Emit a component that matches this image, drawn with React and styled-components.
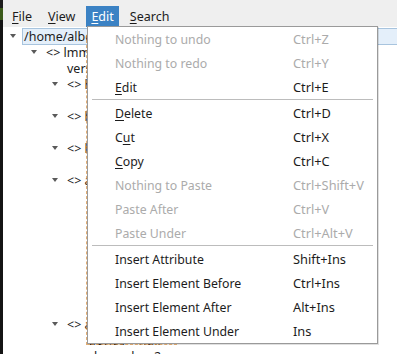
import React from "react"
import styled, { createGlobalStyle } from "styled-components"

const GlobalStyle = createGlobalStyle`
  html, body {
    margin: 0;
    padding: 0;
    background: #ffffff;
  }
  body {
    font-family: "Noto Sans", "Open Sans", sans-serif;
    font-size: 12px;
    color: #1c1c1c;
  }
`

const Screen = styled.div`
  width: 397px;
  height: 354px;
  display: flex;
  overflow: hidden;
  position: relative;
`

const Edge = styled.div`
  width: 3px;
  flex: none;
  background: linear-gradient(
    to bottom,
    #1d1d1d 0,
    #1d1d1d 8px,
    #3b5a1a 8px,
    #3b5a1a 20px,
    #141414 20px
  );
`

const Window = styled.div`
  flex: 1;
  display: flex;
  flex-direction: column;
  position: relative;
`

const MenuBar = styled.div`
  height: 27px;
  box-sizing: border-box;
  padding: 6px 0 0 4px;
  display: flex;
  gap: 6px;
  background: #efefef;
`

const BarItem = styled.div`
  height: 21px;
  padding: 0 5px;
  display: flex;
  align-items: center;
  font-size: 12.5px;
  color: ${p => (p.$active ? "#ffffff" : "#1c1c1c")};
  background: ${p => (p.$active ? "#3b82c4" : "transparent")};
`

const Mn = styled.span`
  text-decoration: underline;
  text-underline-offset: 2px;
`

const Tree = styled.div`
  flex: 1;
  padding-top: 1px;
  background: #ffffff;
`

const Row = styled.div`
  height: 16px;
  display: flex;
  align-items: center;
  padding-left: ${p => p.$level * 21 + 6}px;
  white-space: nowrap;
  font-size: 12.5px;
`

const Arrow = styled.span`
  flex: none;
  width: 0;
  height: 0;
  margin: 0 8px 0 1px;
  border-left: 3.5px solid transparent;
  border-right: 3.5px solid transparent;
  border-top: 4px solid ${p => (p.$leaf ? "transparent" : "#5a5a5a")};
`

const Label = styled.span`
  height: 15px;
  line-height: 15px;
  padding-left: ${p => (p.$selected ? "1px" : "0")};
  margin-left: ${p => (p.$selected ? "-2px" : "0")};
  flex: ${p => (p.$selected ? "1" : "none")};
  background: ${p => (p.$selected ? "#e4effa" : "transparent")};
  border: 1px solid ${p => (p.$selected ? "#a8c4de" : "transparent")};
  border-right: none;
`

const Popup = styled.div`
  position: absolute;
  left: 84px;
  top: 26px;
  width: 289px;
  background: #ffffff;
  border: 1px solid #9a9a9a;
  box-shadow: 1px 1px 0 rgba(0, 0, 0, 0.12);

  &::before {
    content: "";
    position: absolute;
    left: -2px;
    bottom: -2px;
    top: 8px;
    right: 200px;
    border-left: 1px dashed rgba(214, 140, 60, 0.7);
    border-bottom: 1px dashed rgba(214, 140, 60, 0.7);
  }
`

const Item = styled.div`
  height: 24px;
  display: grid;
  grid-template-columns: 178px 1fr;
  align-items: center;
  padding-left: 27px;
  font-size: 12.3px;
  color: ${p => (p.$disabled ? "#ababab" : "#1c1c1c")};
`

const Shortcut = styled.span`
  font-size: 12.8px;
`

const Separator = styled.div`
  height: 2px;
  margin: 0 4px;
  border-top: 1px solid #bcbcbc;
  box-sizing: border-box;
`

const tree = [
  { level: 0, text: "/home/alberto/projects/demo.mmp", arrow: true, selected: true },
  { level: 1, text: "<> lmms-project", arrow: true },
  { level: 2, text: "version = 1.0", arrow: false },
  { level: 2, text: "<> head", arrow: true },
  { level: 3, text: "bpm = 140", arrow: false },
  { level: 2, text: "<> head", arrow: true },
  { level: 3, text: "timesig = 4", arrow: false },
  { level: 2, text: "<> head", arrow: true },
  { level: 3, text: "mastervol = 100", arrow: false },
  { level: 2, text: "<> audio", arrow: true },
  { level: 3, text: "samplerate = 44100", arrow: false },
  { level: 3, text: "buffersize = 256", arrow: false },
  { level: 3, text: "latency = 10", arrow: false },
  { level: 3, text: "backend = jack", arrow: false },
  { level: 3, text: "input = system", arrow: false },
  { level: 3, text: "output = system", arrow: false },
  { level: 3, text: "format = float", arrow: false },
  { level: 3, text: "dither = none", arrow: false },
  { level: 2, text: "<> audio", arrow: true },
  { level: 3, text: "device = null", arrow: false },
  { level: 3, text: "channels = 2", arrow: false },
]

const menu = [
  { label: "Nothing to undo", key: "Ctrl+Z", disabled: true },
  { label: "Nothing to redo", key: "Ctrl+Y", disabled: true },
  { label: "Edit", mn: 0, key: "Ctrl+E" },
  { sep: true },
  { label: "Delete", mn: 0, key: "Ctrl+D" },
  { label: "Cut", mn: 1, key: "Ctrl+X" },
  { label: "Copy", mn: 0, key: "Ctrl+C" },
  { label: "Nothing to Paste", key: "Ctrl+Shift+V", disabled: true },
  { label: "Paste After", key: "Ctrl+V", disabled: true },
  { label: "Paste Under", key: "Ctrl+Alt+V", disabled: true },
  { sep: true },
  { label: "Insert Attribute", key: "Shift+Ins" },
  { label: "Insert Element Before", key: "Ctrl+Ins" },
  { label: "Insert Element After", key: "Alt+Ins" },
  { label: "Insert Element Under", key: "Ins" },
]

function Mnemonic({ text, at }) {
  if (at === undefined) return text
  return (
    <>
      {text.slice(0, at)}
      <Mn>{text[at]}</Mn>
      {text.slice(at + 1)}
    </>
  )
}

export default function App() {
  return (
    <>
      <GlobalStyle />
      <Screen>
        <Edge />
        <Window>
          <MenuBar>
            <BarItem><Mnemonic text="File" at={0} /></BarItem>
            <BarItem><Mnemonic text="View" at={0} /></BarItem>
            <BarItem $active><Mnemonic text="Edit" at={0} /></BarItem>
            <BarItem><Mnemonic text="Search" at={0} /></BarItem>
          </MenuBar>
          <Tree>
            {tree.map((r, i) => (
              <Row key={i} $level={r.level}>
                <Arrow $leaf={!r.arrow} />
                <Label $selected={r.selected}>{r.text}</Label>
              </Row>
            ))}
          </Tree>
          <Popup>
            {menu.map((m, i) =>
              m.sep ? (
                <Separator key={i} />
              ) : (
                <Item key={i} $disabled={m.disabled}>
                  <span><Mnemonic text={m.label} at={m.mn} /></span>
                  <Shortcut>{m.key}</Shortcut>
                </Item>
              )
            )}
          </Popup>
        </Window>
      </Screen>
    </>
  )
}
